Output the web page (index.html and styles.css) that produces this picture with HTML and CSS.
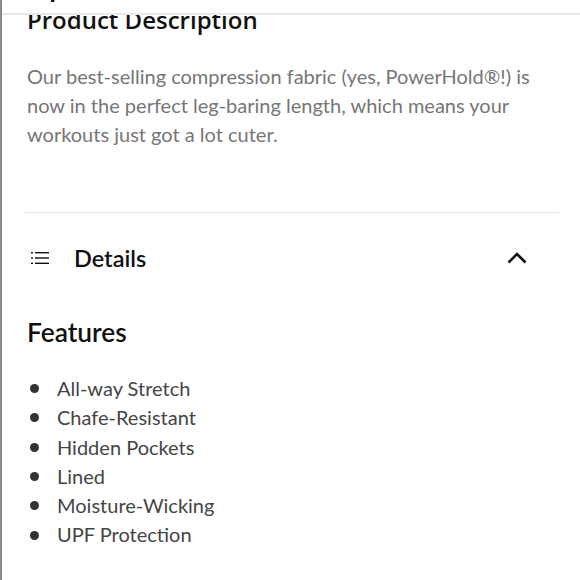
FILE: index.html
```html
<!DOCTYPE html>
<html>
<head>
<meta charset="utf-8">
<link rel="stylesheet" href="styles.css">
</head>
<body>
<div class="frame">
  <header class="topbar"><span class="shop">Shop</span></header>
  <main class="content">
    <h2 class="desc-title">Product Description</h2>
    <p class="desc">Our best-selling compression fabric (yes, PowerHold®!) is now in the perfect leg-baring length, which means your workouts just got a lot cuter.</p>
    <hr class="divider">
    <div class="details-row">
      <svg class="list-icon" width="18" height="14" viewBox="0 0 18 14">
        <g fill="#111">
          <rect x="0" y="1" width="2" height="1.4"/>
          <rect x="4" y="1" width="14" height="1.4"/>
          <rect x="0" y="6.3" width="2" height="1.4"/>
          <rect x="4" y="6.3" width="14" height="1.4"/>
          <rect x="0" y="11.6" width="2" height="1.4"/>
          <rect x="4" y="11.6" width="14" height="1.4"/>
        </g>
      </svg>
      <span class="details-label">Details</span>
      <svg class="chevron" width="20" height="12" viewBox="0 0 20 12">
        <path d="M1.5 10.5 L10 2 L18.5 10.5" fill="none" stroke="#111" stroke-width="2.6"/>
      </svg>
    </div>
    <h3 class="features-title">Features</h3>
    <ul class="features">
      <li>All-way Stretch</li>
      <li>Chafe-Resistant</li>
      <li>Hidden Pockets</li>
      <li>Lined</li>
      <li>Moisture-Wicking</li>
      <li>UPF Protection</li>
    </ul>
  </main>
</div>
</body>
</html>
```
FILE: styles.css
```css
html, body {
  margin: 0;
  padding: 0;
  background: #fff;
}
.frame {
  position: relative;
  width: 580px;
  height: 580px;
  overflow: hidden;
  border-left: 2px solid #8a8a8a;
  box-sizing: border-box;
}
.topbar {
  position: absolute;
  top: 0;
  left: 0;
  right: 0;
  height: 13px;
  background: #fff;
  border-bottom: 2px solid #e8e8e8;
  overflow: hidden;
  z-index: 2;
}
.shop {
  position: absolute;
  left: 7px;
  top: -27px;
  font-family: "Open Sans", sans-serif;
  font-weight: 700;
  font-size: 22px;
  color: #111;
}
.content {
  padding: 0 23px 0 25px;
}
.desc-title {
  margin: 0;
  padding-top: 2px;
  font-family: "Open Sans", sans-serif;
  font-weight: 600;
  font-size: 24px;
  line-height: 36px;
  color: #111;
}
.desc {
  margin: 24px 0 0;
  font-family: Lato, sans-serif;
  font-size: 20px;
  line-height: 29px;
  color: #767676;
}
.divider {
  margin: 63px -2px 0;
  border: 0;
  border-top: 1px solid #e6e6e6;
}
.details-row {
  display: flex;
  align-items: center;
  height: 46px;
  margin-top: 22px;
  padding: 0 30px 0 4px;
}
.list-icon {
  flex: none;
}
.details-label {
  margin-left: 25px;
  flex: 1;
  font-family: Lato, sans-serif;
  font-weight: 600;
  font-size: 23.5px;
  color: #111;
}
.chevron {
  flex: none;
}
.features-title {
  margin: 35px 0 0;
  font-family: Lato, sans-serif;
  font-weight: 600;
  font-size: 26.3px;
  line-height: 32px;
  color: #111;
}
.features {
  list-style: none;
  margin: 26px 0 0;
  padding: 0;
}
.features li {
  display: flex;
  align-items: center;
  font-family: Lato, sans-serif;
  font-size: 20px;
  line-height: 29.3px;
  color: #454545;
}
.features li::before {
  content: "";
  width: 9px;
  height: 9px;
  border-radius: 50%;
  background: #333;
  margin: 0 18px 0 3px;
  flex: none;
}
```
